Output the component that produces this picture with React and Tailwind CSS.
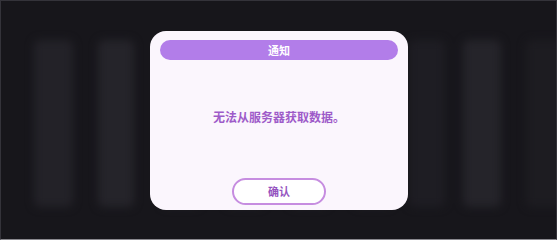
import React from 'react';

const CARDS = [
  { left: 33, width: 39, tone: 'bg-[#232228]' },
  { left: 97, width: 36, tone: 'bg-[#25242a]' },
  { left: 161, width: 38, tone: 'bg-[#232228]' },
  { left: 225, width: 38, tone: 'bg-[#232228]' },
  { left: 289, width: 38, tone: 'bg-[#232228]' },
  { left: 353, width: 38, tone: 'bg-[#232228]' },
  { left: 408, width: 36, tone: 'bg-[#1e1d23]' },
  { left: 462, width: 38, tone: 'bg-[#25242a]' },
  { left: 525, width: 38, tone: 'bg-[#1d1c21]' },
];

export default function App() {
  return (
    <div
      className="relative w-[557px] h-[240px] overflow-hidden bg-[#17161b] border border-[#34333a] border-b-[#8a898f]"
      style={{ fontFamily: '"Noto Sans", "Noto Sans CJK SC", sans-serif' }}
    >
      {/* blurred page behind the modal */}
      <div className="absolute inset-0 blur-[4px]">
        {CARDS.map((c, i) => (
          <div
            key={i}
            className={`absolute top-[39px] h-[167px] rounded-md ${c.tone}`}
            style={{ left: c.left, width: c.width }}
          />
        ))}
      </div>

      {/* Modal */}
      <div className="absolute left-[149px] top-[30px] w-[258px] h-[179px] rounded-[16px] bg-[#fbf6fd] flex flex-col items-center px-[10px] pt-[9px] pb-[4px]">
        <div className="w-full h-[20px] rounded-full bg-[#b27de9] flex items-center justify-center">
          <span className="text-white text-[11px] font-bold leading-none">通知</span>
        </div>
        <div className="flex-1 flex items-center justify-center">
          <p className="text-[12px] font-bold text-[#9e5bc9] leading-none mb-[2px]">无法从服务器获取数据。</p>
        </div>
        <button className="w-[94px] h-[27px] mb-[1px] rounded-full border-2 border-[#c68de0] bg-white flex items-center justify-center">
          <span className="text-[11px] font-bold text-[#9554c0] leading-none">确认</span>
        </button>
      </div>
    </div>
  );
}
